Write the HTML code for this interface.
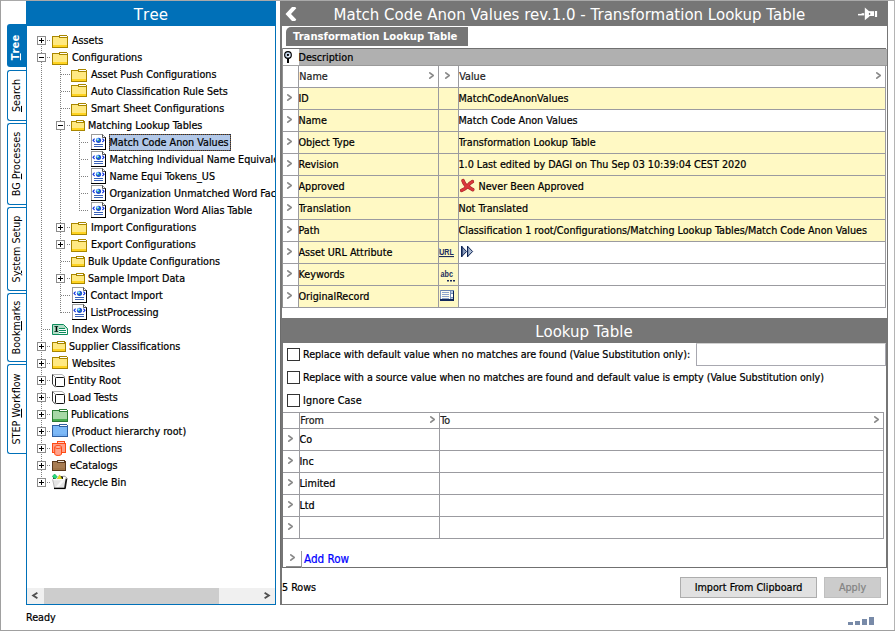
<!DOCTYPE html><html><head><meta charset="utf-8"><title>Match Code Anon Values</title><style>
html,body{margin:0;padding:0;}
body{width:895px;height:631px;position:relative;overflow:hidden;background:#fff;font-family:"DejaVu Sans Condensed","Liberation Sans",sans-serif;font-size:10.7px;color:#000;-webkit-text-stroke:0.22px currentColor;}
div,span,svg{position:absolute;box-sizing:border-box;}
.t{white-space:nowrap;line-height:17px;height:17px;}
.c{white-space:nowrap;line-height:21px;height:21px;}
.hd{font-family:"DejaVu Sans","Liberation Sans",sans-serif;font-size:15px;color:#fff;white-space:nowrap;text-align:center;line-height:25px;padding-top:2px;-webkit-text-stroke:0;}
.vt{white-space:nowrap;transform-origin:0 0;transform:rotate(-90deg);line-height:19px;height:19px;text-align:center;-webkit-text-stroke:0;}
u{text-decoration:underline;}
</style></head><body>
<div style="left:0px;top:0px;width:895px;height:1px;background:#a9a9a9"></div>
<div style="left:0px;top:0px;width:1px;height:631px;background:#a0a0a0"></div>
<div style="left:894px;top:0px;width:1px;height:631px;background:#b4b4b4"></div>
<div style="left:0px;top:630px;width:895px;height:1px;background:#a0a0a0"></div>
<div style="left:7px;top:24px;width:20px;height:43px;background:#0070b8;border-radius:3px 0 0 3px;"></div>
<div class="vt" style="left:7px;top:67px;width:43px;color:#fff;font-weight:bold;font-size:11.2px;font-kerning:none;margin-left:-1px;margin-top:2.2px;-webkit-text-stroke:0;"><u>T</u>ree</div>
<div style="left:7px;top:70px;width:20px;height:51px;background:#fff;border:1px solid #0070b8;border-right:none;border-radius:3px 0 0 3px;"></div>
<div class="vt" style="left:7px;top:121px;width:51px;color:#000;"><u>S</u>earch</div>
<div style="left:7px;top:123px;width:20px;height:82px;background:#fff;border:1px solid #0070b8;border-right:none;border-radius:3px 0 0 3px;"></div>
<div class="vt" style="left:7px;top:205px;width:82px;color:#000;">BG <u>P</u>rocesses</div>
<div style="left:7px;top:207px;width:20px;height:84px;background:#fff;border:1px solid #0070b8;border-right:none;border-radius:3px 0 0 3px;"></div>
<div class="vt" style="left:7px;top:291px;width:84px;color:#000;">S<u>y</u>stem Setup</div>
<div style="left:7px;top:293px;width:20px;height:69px;background:#fff;border:1px solid #0070b8;border-right:none;border-radius:3px 0 0 3px;"></div>
<div class="vt" style="left:7px;top:362px;width:69px;color:#000;">Book<u>m</u>arks</div>
<div style="left:7px;top:364px;width:20px;height:90px;background:#fff;border:1px solid #0070b8;border-right:none;border-radius:3px 0 0 3px;"></div>
<div class="vt" style="left:7px;top:454px;width:90px;color:#000;">STEP <u>W</u>orkflow</div>
<div class="hd" style="left:26px;top:1px;width:250px;height:25px;background:#0070b8;font-kerning:none;letter-spacing:0.15px">Tree</div>
<div style="left:26px;top:26px;width:250px;height:579px;border:1px solid #0070b8;border-top:none;background:#fff"></div>
<div style="left:27px;top:26px;width:248px;height:562px;overflow:hidden">
<div style="left:14px;top:20px;width:1px;height:432px;background:repeating-linear-gradient(to bottom,#808080 0 1px,transparent 1px 2px);"></div>
<div style="left:33px;top:38px;width:1px;height:249px;background:repeating-linear-gradient(to bottom,#808080 0 1px,transparent 1px 2px);"></div>
<div style="left:52px;top:106px;width:1px;height:79px;background:repeating-linear-gradient(to bottom,#808080 0 1px,transparent 1px 2px);"></div>
<div style="left:20px;top:14px;width:4px;height:1px;background:repeating-linear-gradient(to right,#808080 0 1px,transparent 1px 2px);"></div>
<div style="left:10px;top:10px;width:9px;height:9px;border:1px solid #8c8c8c;background:#fff"></div>
<div style="left:12px;top:14px;width:5px;height:1px;background:#000"></div>
<div style="left:14px;top:12px;width:1px;height:5px;background:#000"></div>
<div style="left:25px;top:6px;width:16px;height:16px"><svg width="16" height="18" viewBox="0 -1 16 18" style="top:-1px" shape-rendering="crispEdges"><rect x="7.5" y="3.5" width="8" height="3" fill="#fff" stroke="#a88600"/><rect x="0.5" y="4.5" width="15" height="11" fill="#ffe981" stroke="#a88600"/><rect x="1" y="13" width="14" height="2" fill="#ffd320"/><rect x="8" y="4" width="7" height="1" fill="#fff"/><rect x="7" y="5" width="9" height="1" fill="#a88600"/><rect x="15" y="3" width="1" height="1" fill="#fff"/></svg></div>
<div class="t" style="left:45px;top:6px;width:300px;height:17px;">Assets</div>
<div style="left:20px;top:31px;width:4px;height:1px;background:repeating-linear-gradient(to right,#808080 0 1px,transparent 1px 2px);"></div>
<div style="left:10px;top:27px;width:9px;height:9px;border:1px solid #8c8c8c;background:#fff"></div>
<div style="left:12px;top:31px;width:5px;height:1px;background:#000"></div>
<div style="left:25px;top:23px;width:16px;height:16px"><svg width="16" height="18" viewBox="0 -1 16 18" style="top:-1px" shape-rendering="crispEdges"><rect x="7.5" y="3.5" width="8" height="3" fill="#fff" stroke="#a88600"/><rect x="0.5" y="4.5" width="15" height="11" fill="#ffe981" stroke="#a88600"/><rect x="1" y="13" width="14" height="2" fill="#ffd320"/><rect x="8" y="4" width="7" height="1" fill="#fff"/><rect x="7" y="5" width="9" height="1" fill="#a88600"/><rect x="15" y="3" width="1" height="1" fill="#fff"/></svg></div>
<div class="t" style="left:45px;top:23px;width:300px;height:17px;">Configurations</div>
<div style="left:34px;top:48px;width:9px;height:1px;background:repeating-linear-gradient(to right,#808080 0 1px,transparent 1px 2px);"></div>
<div style="left:44px;top:40px;width:16px;height:16px"><svg width="16" height="18" viewBox="0 -1 16 18" style="top:-1px" shape-rendering="crispEdges"><rect x="7.5" y="3.5" width="8" height="3" fill="#fff" stroke="#a88600"/><rect x="0.5" y="4.5" width="15" height="11" fill="#ffe981" stroke="#a88600"/><rect x="1" y="13" width="14" height="2" fill="#ffd320"/><rect x="8" y="4" width="7" height="1" fill="#fff"/><rect x="7" y="5" width="9" height="1" fill="#a88600"/><rect x="15" y="3" width="1" height="1" fill="#fff"/></svg></div>
<div class="t" style="left:64px;top:40px;width:300px;height:17px;">Asset Push Configurations</div>
<div style="left:34px;top:65px;width:9px;height:1px;background:repeating-linear-gradient(to right,#808080 0 1px,transparent 1px 2px);"></div>
<div style="left:44px;top:57px;width:16px;height:16px"><svg width="16" height="18" viewBox="0 1 16 18" style="top:-1px" shape-rendering="crispEdges"><rect x="7.5" y="3.5" width="8" height="3" fill="#fff" stroke="#a88600"/><rect x="0.5" y="4.5" width="15" height="11" fill="#ffe981" stroke="#a88600"/><rect x="1" y="13" width="14" height="2" fill="#ffd320"/><rect x="8" y="4" width="7" height="1" fill="#fff"/><rect x="7" y="5" width="9" height="1" fill="#a88600"/><rect x="15" y="3" width="1" height="1" fill="#fff"/></svg></div>
<div class="t" style="left:64px;top:57px;width:300px;height:17px;">Auto Classification Rule Sets</div>
<div style="left:34px;top:82px;width:9px;height:1px;background:repeating-linear-gradient(to right,#808080 0 1px,transparent 1px 2px);"></div>
<div style="left:44px;top:74px;width:16px;height:16px"><svg width="16" height="18" viewBox="0 -1 16 18" style="top:-1px" shape-rendering="crispEdges"><rect x="7.5" y="3.5" width="8" height="3" fill="#fff" stroke="#a88600"/><rect x="0.5" y="4.5" width="15" height="11" fill="#ffe981" stroke="#a88600"/><rect x="1" y="13" width="14" height="2" fill="#ffd320"/><rect x="8" y="4" width="7" height="1" fill="#fff"/><rect x="7" y="5" width="9" height="1" fill="#a88600"/><rect x="15" y="3" width="1" height="1" fill="#fff"/></svg></div>
<div class="t" style="left:64px;top:74px;width:300px;height:17px;">Smart Sheet Configurations</div>
<div style="left:40px;top:99px;width:3px;height:1px;background:repeating-linear-gradient(to right,#808080 0 1px,transparent 1px 2px);"></div>
<div style="left:29px;top:95px;width:9px;height:9px;border:1px solid #8c8c8c;background:#fff"></div>
<div style="left:31px;top:99px;width:5px;height:1px;background:#000"></div>
<div style="left:44px;top:91px;width:14px;height:16px"><svg width="14" height="18" viewBox="0 -1 14 18" style="top:-1px" shape-rendering="crispEdges"><rect x="5.5" y="3.5" width="7" height="3" fill="#fff" stroke="#a88600"/><rect x="0.5" y="4.5" width="13" height="9" fill="#ffe981" stroke="#a88600"/><rect x="1" y="11" width="12" height="2" fill="#ffd320"/><rect x="6" y="4" width="6" height="1" fill="#fff"/><rect x="5" y="5" width="8" height="1" fill="#a88600"/></svg></div>
<div class="t" style="left:61px;top:91px;width:300px;height:17px;">Matching Lookup Tables</div>
<div style="left:54px;top:116px;width:8px;height:1px;background:repeating-linear-gradient(to right,#808080 0 1px,transparent 1px 2px);"></div>
<div style="left:63px;top:108px;width:16px;height:16px"><svg width="17" height="16" viewBox="-1 0 17 16"><path d="M0.5 0.5H11.5L14.5 3.5V15H0.5Z" fill="#fff" stroke="#9a9a9a" shape-rendering="crispEdges"/><path d="M0 15.5H15M14.5 3V16M11.5 3.5H15" stroke="#000" stroke-width="1.3" fill="none" shape-rendering="crispEdges"/><path d="M11.5 0.5V3.5H14.5" fill="none" stroke="#555" stroke-width="1"/><circle cx="7.5" cy="6.3" r="2.6" fill="#1a4fd8"/><circle cx="6.7" cy="5.5" r="1.25" fill="#8fe9ff"/><circle cx="7.9" cy="6.6" r="0.8" fill="#2fb84f"/><path d="M3.6 4.6L2 6.3L3.6 8M11.4 4.6L13 6.3L11.4 8" fill="none" stroke="#1030e0" stroke-width="1.1"/><path d="M3 10.5H12M3 12.5H12" stroke="#3a62b8" stroke-width="1" shape-rendering="crispEdges"/></svg></div>
<div style="left:82px;top:108px;width:122px;height:17px;background:#b2c8e8"></div>
<div style="left:82px;top:108px;width:122px;height:1px;background:repeating-linear-gradient(to right,#1a3058 0 1px,#8a6230 1px 2px)"></div>
<div style="left:82px;top:124px;width:122px;height:1px;background:repeating-linear-gradient(to right,#1a3058 0 1px,#8a6230 1px 2px)"></div>
<div style="left:82px;top:108px;width:1px;height:17px;background:repeating-linear-gradient(to bottom,#1a3058 0 1px,#8a6230 1px 2px)"></div>
<div style="left:203px;top:108px;width:1px;height:17px;background:repeating-linear-gradient(to bottom,#1a3058 0 1px,#8a6230 1px 2px)"></div>
<div class="t" style="left:82.5px;top:108px;width:300px;height:17px;">Match Code Anon Values</div>
<div style="left:54px;top:133px;width:8px;height:1px;background:repeating-linear-gradient(to right,#808080 0 1px,transparent 1px 2px);"></div>
<div style="left:63px;top:125px;width:16px;height:16px"><svg width="17" height="16" viewBox="-1 0 17 16"><path d="M0.5 0.5H11.5L14.5 3.5V15H0.5Z" fill="#fff" stroke="#9a9a9a" shape-rendering="crispEdges"/><path d="M0 15.5H15M14.5 3V16M11.5 3.5H15" stroke="#000" stroke-width="1.3" fill="none" shape-rendering="crispEdges"/><path d="M11.5 0.5V3.5H14.5" fill="none" stroke="#555" stroke-width="1"/><circle cx="7.5" cy="6.3" r="2.6" fill="#1a4fd8"/><circle cx="6.7" cy="5.5" r="1.25" fill="#8fe9ff"/><circle cx="7.9" cy="6.6" r="0.8" fill="#2fb84f"/><path d="M3.6 4.6L2 6.3L3.6 8M11.4 4.6L13 6.3L11.4 8" fill="none" stroke="#1030e0" stroke-width="1.1"/><path d="M3 10.5H12M3 12.5H12" stroke="#3a62b8" stroke-width="1" shape-rendering="crispEdges"/></svg></div>
<div class="t" style="left:82.5px;top:125px;width:300px;height:17px;">Matching Individual Name Equivalents</div>
<div style="left:54px;top:150px;width:8px;height:1px;background:repeating-linear-gradient(to right,#808080 0 1px,transparent 1px 2px);"></div>
<div style="left:63px;top:142px;width:16px;height:16px"><svg width="17" height="16" viewBox="-1 0 17 16"><path d="M0.5 0.5H11.5L14.5 3.5V15H0.5Z" fill="#fff" stroke="#9a9a9a" shape-rendering="crispEdges"/><path d="M0 15.5H15M14.5 3V16M11.5 3.5H15" stroke="#000" stroke-width="1.3" fill="none" shape-rendering="crispEdges"/><path d="M11.5 0.5V3.5H14.5" fill="none" stroke="#555" stroke-width="1"/><circle cx="7.5" cy="6.3" r="2.6" fill="#1a4fd8"/><circle cx="6.7" cy="5.5" r="1.25" fill="#8fe9ff"/><circle cx="7.9" cy="6.6" r="0.8" fill="#2fb84f"/><path d="M3.6 4.6L2 6.3L3.6 8M11.4 4.6L13 6.3L11.4 8" fill="none" stroke="#1030e0" stroke-width="1.1"/><path d="M3 10.5H12M3 12.5H12" stroke="#3a62b8" stroke-width="1" shape-rendering="crispEdges"/></svg></div>
<div class="t" style="left:82.5px;top:142px;width:300px;height:17px;">Name Equi Tokens_US</div>
<div style="left:54px;top:167px;width:8px;height:1px;background:repeating-linear-gradient(to right,#808080 0 1px,transparent 1px 2px);"></div>
<div style="left:63px;top:159px;width:16px;height:16px"><svg width="17" height="16" viewBox="-1 0 17 16"><path d="M0.5 0.5H11.5L14.5 3.5V15H0.5Z" fill="#fff" stroke="#9a9a9a" shape-rendering="crispEdges"/><path d="M0 15.5H15M14.5 3V16M11.5 3.5H15" stroke="#000" stroke-width="1.3" fill="none" shape-rendering="crispEdges"/><path d="M11.5 0.5V3.5H14.5" fill="none" stroke="#555" stroke-width="1"/><circle cx="7.5" cy="6.3" r="2.6" fill="#1a4fd8"/><circle cx="6.7" cy="5.5" r="1.25" fill="#8fe9ff"/><circle cx="7.9" cy="6.6" r="0.8" fill="#2fb84f"/><path d="M3.6 4.6L2 6.3L3.6 8M11.4 4.6L13 6.3L11.4 8" fill="none" stroke="#1030e0" stroke-width="1.1"/><path d="M3 10.5H12M3 12.5H12" stroke="#3a62b8" stroke-width="1" shape-rendering="crispEdges"/></svg></div>
<div class="t" style="left:82.5px;top:159px;width:300px;height:17px;">Organization Unmatched Word Factors</div>
<div style="left:54px;top:184px;width:8px;height:1px;background:repeating-linear-gradient(to right,#808080 0 1px,transparent 1px 2px);"></div>
<div style="left:63px;top:176px;width:16px;height:16px"><svg width="17" height="16" viewBox="-1 0 17 16"><path d="M0.5 0.5H11.5L14.5 3.5V15H0.5Z" fill="#fff" stroke="#9a9a9a" shape-rendering="crispEdges"/><path d="M0 15.5H15M14.5 3V16M11.5 3.5H15" stroke="#000" stroke-width="1.3" fill="none" shape-rendering="crispEdges"/><path d="M11.5 0.5V3.5H14.5" fill="none" stroke="#555" stroke-width="1"/><circle cx="7.5" cy="6.3" r="2.6" fill="#1a4fd8"/><circle cx="6.7" cy="5.5" r="1.25" fill="#8fe9ff"/><circle cx="7.9" cy="6.6" r="0.8" fill="#2fb84f"/><path d="M3.6 4.6L2 6.3L3.6 8M11.4 4.6L13 6.3L11.4 8" fill="none" stroke="#1030e0" stroke-width="1.1"/><path d="M3 10.5H12M3 12.5H12" stroke="#3a62b8" stroke-width="1" shape-rendering="crispEdges"/></svg></div>
<div class="t" style="left:82.5px;top:176px;width:300px;height:17px;">Organization Word Alias Table</div>
<div style="left:40px;top:201px;width:3px;height:1px;background:repeating-linear-gradient(to right,#808080 0 1px,transparent 1px 2px);"></div>
<div style="left:29px;top:197px;width:9px;height:9px;border:1px solid #8c8c8c;background:#fff"></div>
<div style="left:31px;top:201px;width:5px;height:1px;background:#000"></div>
<div style="left:33px;top:199px;width:1px;height:5px;background:#000"></div>
<div style="left:44px;top:193px;width:16px;height:16px"><svg width="16" height="18" viewBox="0 -1 16 18" style="top:-1px" shape-rendering="crispEdges"><rect x="7.5" y="3.5" width="8" height="3" fill="#fff" stroke="#a88600"/><rect x="0.5" y="4.5" width="15" height="11" fill="#ffe981" stroke="#a88600"/><rect x="1" y="13" width="14" height="2" fill="#ffd320"/><rect x="8" y="4" width="7" height="1" fill="#fff"/><rect x="7" y="5" width="9" height="1" fill="#a88600"/><rect x="15" y="3" width="1" height="1" fill="#fff"/></svg></div>
<div class="t" style="left:64px;top:193px;width:300px;height:17px;">Import Configurations</div>
<div style="left:40px;top:218px;width:3px;height:1px;background:repeating-linear-gradient(to right,#808080 0 1px,transparent 1px 2px);"></div>
<div style="left:29px;top:214px;width:9px;height:9px;border:1px solid #8c8c8c;background:#fff"></div>
<div style="left:31px;top:218px;width:5px;height:1px;background:#000"></div>
<div style="left:33px;top:216px;width:1px;height:5px;background:#000"></div>
<div style="left:44px;top:210px;width:16px;height:16px"><svg width="16" height="18" viewBox="0 -1 16 18" style="top:-1px" shape-rendering="crispEdges"><rect x="7.5" y="3.5" width="8" height="3" fill="#fff" stroke="#a88600"/><rect x="0.5" y="4.5" width="15" height="11" fill="#ffe981" stroke="#a88600"/><rect x="1" y="13" width="14" height="2" fill="#ffd320"/><rect x="8" y="4" width="7" height="1" fill="#fff"/><rect x="7" y="5" width="9" height="1" fill="#a88600"/><rect x="15" y="3" width="1" height="1" fill="#fff"/></svg></div>
<div class="t" style="left:64px;top:210px;width:300px;height:17px;">Export Configurations</div>
<div style="left:34px;top:235px;width:9px;height:1px;background:repeating-linear-gradient(to right,#808080 0 1px,transparent 1px 2px);"></div>
<div style="left:44px;top:227px;width:14px;height:16px"><svg width="14" height="18" viewBox="0 -1 14 18" style="top:-1px" shape-rendering="crispEdges"><rect x="5.5" y="3.5" width="7" height="3" fill="#fff" stroke="#a88600"/><rect x="0.5" y="4.5" width="13" height="9" fill="#ffe981" stroke="#a88600"/><rect x="1" y="11" width="12" height="2" fill="#ffd320"/><rect x="6" y="4" width="6" height="1" fill="#fff"/><rect x="5" y="5" width="8" height="1" fill="#a88600"/></svg></div>
<div class="t" style="left:61px;top:227px;width:300px;height:17px;">Bulk Update Configurations</div>
<div style="left:40px;top:252px;width:3px;height:1px;background:repeating-linear-gradient(to right,#808080 0 1px,transparent 1px 2px);"></div>
<div style="left:29px;top:248px;width:9px;height:9px;border:1px solid #8c8c8c;background:#fff"></div>
<div style="left:31px;top:252px;width:5px;height:1px;background:#000"></div>
<div style="left:33px;top:250px;width:1px;height:5px;background:#000"></div>
<div style="left:44px;top:244px;width:14px;height:16px"><svg width="14" height="18" viewBox="0 -1 14 18" style="top:-1px" shape-rendering="crispEdges"><rect x="5.5" y="3.5" width="7" height="3" fill="#fff" stroke="#a88600"/><rect x="0.5" y="4.5" width="13" height="9" fill="#ffe981" stroke="#a88600"/><rect x="1" y="11" width="12" height="2" fill="#ffd320"/><rect x="6" y="4" width="6" height="1" fill="#fff"/><rect x="5" y="5" width="8" height="1" fill="#a88600"/></svg></div>
<div class="t" style="left:61px;top:244px;width:300px;height:17px;">Sample Import Data</div>
<div style="left:34px;top:269px;width:9px;height:1px;background:repeating-linear-gradient(to right,#808080 0 1px,transparent 1px 2px);"></div>
<div style="left:44px;top:261px;width:16px;height:16px"><svg width="17" height="16" viewBox="-1 0 17 16"><path d="M0.5 0.5H11.5L14.5 3.5V15H0.5Z" fill="#fff" stroke="#9a9a9a" shape-rendering="crispEdges"/><path d="M0 15.5H15M14.5 3V16M11.5 3.5H15" stroke="#000" stroke-width="1.3" fill="none" shape-rendering="crispEdges"/><path d="M11.5 0.5V3.5H14.5" fill="none" stroke="#555" stroke-width="1"/><circle cx="7.5" cy="6.3" r="2.6" fill="#1a4fd8"/><circle cx="6.7" cy="5.5" r="1.25" fill="#8fe9ff"/><circle cx="7.9" cy="6.6" r="0.8" fill="#2fb84f"/><path d="M3.6 4.6L2 6.3L3.6 8M11.4 4.6L13 6.3L11.4 8" fill="none" stroke="#1030e0" stroke-width="1.1"/><path d="M3 10.5H12M3 12.5H12" stroke="#3a62b8" stroke-width="1" shape-rendering="crispEdges"/></svg></div>
<div class="t" style="left:63.5px;top:261px;width:300px;height:17px;">Contact Import</div>
<div style="left:34px;top:286px;width:9px;height:1px;background:repeating-linear-gradient(to right,#808080 0 1px,transparent 1px 2px);"></div>
<div style="left:44px;top:278px;width:16px;height:16px"><svg width="17" height="16" viewBox="-1 0 17 16"><path d="M0.5 0.5H11.5L14.5 3.5V15H0.5Z" fill="#fff" stroke="#9a9a9a" shape-rendering="crispEdges"/><path d="M0 15.5H15M14.5 3V16M11.5 3.5H15" stroke="#000" stroke-width="1.3" fill="none" shape-rendering="crispEdges"/><path d="M11.5 0.5V3.5H14.5" fill="none" stroke="#555" stroke-width="1"/><circle cx="7.5" cy="6.3" r="2.6" fill="#1a4fd8"/><circle cx="6.7" cy="5.5" r="1.25" fill="#8fe9ff"/><circle cx="7.9" cy="6.6" r="0.8" fill="#2fb84f"/><path d="M3.6 4.6L2 6.3L3.6 8M11.4 4.6L13 6.3L11.4 8" fill="none" stroke="#1030e0" stroke-width="1.1"/><path d="M3 10.5H12M3 12.5H12" stroke="#3a62b8" stroke-width="1" shape-rendering="crispEdges"/></svg></div>
<div class="t" style="left:63.5px;top:278px;width:300px;height:17px;">ListProcessing</div>
<div style="left:16px;top:303px;width:8px;height:1px;background:repeating-linear-gradient(to right,#808080 0 1px,transparent 1px 2px);"></div>
<div style="left:25px;top:295px;width:16px;height:16px"><svg width="16" height="16" viewBox="0 0 16 16"><path d="M0.5 3.5H11.5L15.5 7.5V13.5H0.5Z" fill="#b2dcc6" stroke="#0c8c5c"/><path d="M7 7H13L15 9V13H7Z" fill="#fff" opacity="0.9"/><path d="M7 7.5H13M7 9.5H14M7 11.5H14" stroke="#0c8c5c" stroke-width="1" shape-rendering="crispEdges"/><rect x="3.7" y="5" width="1.5" height="6" fill="#000"/><rect x="2.4" y="5" width="3.8" height="0.9" fill="#0a3a2a"/><rect x="2.4" y="10.1" width="3.8" height="0.9" fill="#0a3a2a"/></svg></div>
<div class="t" style="left:45px;top:295px;width:300px;height:17px;">Index Words</div>
<div style="left:20px;top:320px;width:4px;height:1px;background:repeating-linear-gradient(to right,#808080 0 1px,transparent 1px 2px);"></div>
<div style="left:10px;top:316px;width:9px;height:9px;border:1px solid #8c8c8c;background:#fff"></div>
<div style="left:12px;top:320px;width:5px;height:1px;background:#000"></div>
<div style="left:14px;top:318px;width:1px;height:5px;background:#000"></div>
<div style="left:25px;top:312px;width:14px;height:16px"><svg width="14" height="18" viewBox="0 -1 14 18" style="top:-1px" shape-rendering="crispEdges"><rect x="5.5" y="3.5" width="7" height="3" fill="#fff" stroke="#a88600"/><rect x="0.5" y="4.5" width="13" height="9" fill="#ffe981" stroke="#a88600"/><rect x="1" y="11" width="12" height="2" fill="#ffd320"/><rect x="6" y="4" width="6" height="1" fill="#fff"/><rect x="5" y="5" width="8" height="1" fill="#a88600"/></svg></div>
<div class="t" style="left:42px;top:312px;width:300px;height:17px;">Supplier Classifications</div>
<div style="left:20px;top:337px;width:4px;height:1px;background:repeating-linear-gradient(to right,#808080 0 1px,transparent 1px 2px);"></div>
<div style="left:10px;top:333px;width:9px;height:9px;border:1px solid #8c8c8c;background:#fff"></div>
<div style="left:12px;top:337px;width:5px;height:1px;background:#000"></div>
<div style="left:14px;top:335px;width:1px;height:5px;background:#000"></div>
<div style="left:25px;top:329px;width:16px;height:16px"><svg width="16" height="18" viewBox="0 1 16 18" style="top:-1px" shape-rendering="crispEdges"><rect x="7.5" y="3.5" width="8" height="3" fill="#fff" stroke="#a88600"/><rect x="0.5" y="4.5" width="15" height="11" fill="#ffe981" stroke="#a88600"/><rect x="1" y="13" width="14" height="2" fill="#ffd320"/><rect x="8" y="4" width="7" height="1" fill="#fff"/><rect x="7" y="5" width="9" height="1" fill="#a88600"/><rect x="15" y="3" width="1" height="1" fill="#fff"/></svg></div>
<div class="t" style="left:45px;top:329px;width:300px;height:17px;">Websites</div>
<div style="left:20px;top:354px;width:4px;height:1px;background:repeating-linear-gradient(to right,#808080 0 1px,transparent 1px 2px);"></div>
<div style="left:10px;top:350px;width:9px;height:9px;border:1px solid #8c8c8c;background:#fff"></div>
<div style="left:12px;top:354px;width:5px;height:1px;background:#000"></div>
<div style="left:14px;top:352px;width:1px;height:5px;background:#000"></div>
<div style="left:25px;top:346px;width:13px;height:16px"><svg width="14" height="16" viewBox="0 0 14 16"><path d="M0.5 2.5H10L13 5" fill="none" stroke="#b4b4b4" stroke-width="1"/><path d="M0.7 2.7L3.3 5.2" fill="none" stroke="#9a9a9a" stroke-width="1"/><path d="M0.5 2.5V12.2L3.2 14.8" fill="none" stroke="#333" stroke-width="1"/><rect x="3.5" y="5.5" width="9" height="9" rx="0.8" fill="#fff" stroke="#111" stroke-width="1"/></svg></div>
<div class="t" style="left:41px;top:346px;width:300px;height:17px;">Entity Root</div>
<div style="left:20px;top:371px;width:4px;height:1px;background:repeating-linear-gradient(to right,#808080 0 1px,transparent 1px 2px);"></div>
<div style="left:10px;top:367px;width:9px;height:9px;border:1px solid #8c8c8c;background:#fff"></div>
<div style="left:12px;top:371px;width:5px;height:1px;background:#000"></div>
<div style="left:14px;top:369px;width:1px;height:5px;background:#000"></div>
<div style="left:25px;top:363px;width:13px;height:16px"><svg width="14" height="16" viewBox="0 0 14 16"><path d="M0.5 2.5H10L13 5" fill="none" stroke="#b4b4b4" stroke-width="1"/><path d="M0.7 2.7L3.3 5.2" fill="none" stroke="#9a9a9a" stroke-width="1"/><path d="M0.5 2.5V12.2L3.2 14.8" fill="none" stroke="#333" stroke-width="1"/><rect x="3.5" y="5.5" width="9" height="9" rx="0.8" fill="#fff" stroke="#111" stroke-width="1"/></svg></div>
<div class="t" style="left:41px;top:363px;width:300px;height:17px;">Load Tests</div>
<div style="left:20px;top:388px;width:4px;height:1px;background:repeating-linear-gradient(to right,#808080 0 1px,transparent 1px 2px);"></div>
<div style="left:10px;top:384px;width:9px;height:9px;border:1px solid #8c8c8c;background:#fff"></div>
<div style="left:12px;top:388px;width:5px;height:1px;background:#000"></div>
<div style="left:14px;top:386px;width:1px;height:5px;background:#000"></div>
<div style="left:25px;top:380px;width:16px;height:16px"><svg width="16" height="18" viewBox="0 -1 16 18" style="top:-1px" shape-rendering="crispEdges"><rect x="7.5" y="3.5" width="8" height="3" fill="#fff" stroke="#2b7a34"/><rect x="0.5" y="4.5" width="15" height="11" fill="#a6d8a6" stroke="#2b7a34"/><rect x="1" y="13" width="14" height="2" fill="#48ac4e"/><rect x="8" y="4" width="7" height="1" fill="#fff"/><rect x="7" y="5" width="9" height="1" fill="#2b7a34"/><rect x="15" y="3" width="1" height="1" fill="#fff"/></svg></div>
<div class="t" style="left:44px;top:380px;width:300px;height:17px;">Publications</div>
<div style="left:20px;top:405px;width:4px;height:1px;background:repeating-linear-gradient(to right,#808080 0 1px,transparent 1px 2px);"></div>
<div style="left:10px;top:401px;width:9px;height:9px;border:1px solid #8c8c8c;background:#fff"></div>
<div style="left:12px;top:405px;width:5px;height:1px;background:#000"></div>
<div style="left:14px;top:403px;width:1px;height:5px;background:#000"></div>
<div style="left:25px;top:397px;width:16px;height:16px"><svg width="16" height="18" viewBox="0 1 16 18" style="top:-1px" shape-rendering="crispEdges"><rect x="7.5" y="3.5" width="8" height="3" fill="#fff" stroke="#2f5fa0"/><rect x="0.5" y="4.5" width="15" height="11" fill="#7db9f7" stroke="#2f5fa0"/><rect x="1" y="13" width="14" height="2" fill="#74b0f2"/><rect x="8" y="4" width="7" height="1" fill="#fff"/><rect x="7" y="5" width="9" height="1" fill="#2f5fa0"/><rect x="15" y="3" width="1" height="1" fill="#fff"/></svg></div>
<div class="t" style="left:44.5px;top:397px;width:300px;height:17px;">(Product hierarchy root)</div>
<div style="left:20px;top:422px;width:4px;height:1px;background:repeating-linear-gradient(to right,#808080 0 1px,transparent 1px 2px);"></div>
<div style="left:10px;top:418px;width:9px;height:9px;border:1px solid #8c8c8c;background:#fff"></div>
<div style="left:12px;top:422px;width:5px;height:1px;background:#000"></div>
<div style="left:14px;top:420px;width:1px;height:5px;background:#000"></div>
<div style="left:25px;top:414px;width:14px;height:16px"><svg width="14" height="16" viewBox="0 0 14 16"><rect x="5.5" y="1.5" width="7" height="3" fill="#ffd0c4" stroke="#ff4a14" shape-rendering="crispEdges"/><rect x="0.5" y="3.5" width="13" height="9" fill="#ff9d86" stroke="#ff4a14" shape-rendering="crispEdges"/><path d="M2.7 7V14A3.4 1.5 0 0 0 9.5 14V7" fill="#ffa28c" stroke="#ff4a14"/><ellipse cx="6.1" cy="7" rx="3.4" ry="1.5" fill="#ffb9a6" stroke="#ff4a14"/></svg></div>
<div class="t" style="left:42.5px;top:414px;width:300px;height:17px;">Collections</div>
<div style="left:20px;top:439px;width:4px;height:1px;background:repeating-linear-gradient(to right,#808080 0 1px,transparent 1px 2px);"></div>
<div style="left:10px;top:435px;width:9px;height:9px;border:1px solid #8c8c8c;background:#fff"></div>
<div style="left:12px;top:439px;width:5px;height:1px;background:#000"></div>
<div style="left:14px;top:437px;width:1px;height:5px;background:#000"></div>
<div style="left:25px;top:431px;width:14px;height:16px"><svg width="14" height="18" viewBox="0 -1 14 18" style="top:-1px" shape-rendering="crispEdges"><rect x="5.5" y="3.5" width="7" height="3" fill="#f0e4d8" stroke="#5c3a1e"/><rect x="0.5" y="4.5" width="13" height="9" fill="#a87c52" stroke="#5c3a1e"/><rect x="1" y="11" width="12" height="2" fill="#a07448"/><rect x="6" y="4" width="6" height="1" fill="#f0e4d8"/><rect x="5" y="5" width="8" height="1" fill="#5c3a1e"/></svg></div>
<div class="t" style="left:42.7px;top:431px;width:300px;height:17px;">eCatalogs</div>
<div style="left:20px;top:456px;width:4px;height:1px;background:repeating-linear-gradient(to right,#808080 0 1px,transparent 1px 2px);"></div>
<div style="left:10px;top:452px;width:9px;height:9px;border:1px solid #8c8c8c;background:#fff"></div>
<div style="left:12px;top:456px;width:5px;height:1px;background:#000"></div>
<div style="left:14px;top:454px;width:1px;height:5px;background:#000"></div>
<div style="left:25px;top:448px;width:16px;height:16px"><svg width="16" height="16" viewBox="0 0 16 16"><rect x="1.2" y="3.4" width="2.4" height="2" fill="#111"/><rect x="8.4" y="2.2" width="2.6" height="2.8" fill="#111"/><path d="M10.5 2.4L13 2.2L15.3 4.6" fill="none" stroke="#9a9a9a" stroke-width="1"/><path d="M0.3 2.4L2.6 0L5.3 2.8L3.1 5.3Z" fill="#25dd7a" stroke="#0c9a4c" stroke-width="0.6"/><path d="M5 5.3L7.6 0.9L10.3 5.3Z" fill="#e6de22" stroke="#b4ac14" stroke-width="0.5"/><path d="M0.4 5.2H14.7L13.1 14H2.3Z" fill="#e4e4e4"/><path d="M0.3 5H14.7V6.3H0.5Z" fill="#fbfbfb"/><path d="M9.2 6.6H12.6L6.2 13.6H3.6Z" fill="#f8f8f8"/><path d="M0.6 5.4L2.5 14" stroke="#b8b8b8" stroke-width="1" fill="none"/><path d="M14.5 4.6L13 14" stroke="#111" stroke-width="1.7" fill="none"/><path d="M2 14.4H13.6" stroke="#000" stroke-width="1.4"/></svg></div>
<div class="t" style="left:44px;top:448px;width:300px;height:17px;">Recycle Bin</div>
</div>
<div style="left:27px;top:588px;width:248px;height:16px;background:#f0f0f0"></div>
<div style="left:44px;top:588px;width:175px;height:16px;background:#cdcdcd"></div>
<svg style="left:31px;top:591px" width="8" height="10" viewBox="0 0 8 10"><path d="M6.4 1.8L2.2 4.5L6.4 7.2" fill="none" stroke="#505050" stroke-width="1.9"/></svg>
<svg style="left:263px;top:591px" width="8" height="10" viewBox="0 0 8 10"><path d="M1.6 1.8L5.8 4.5L1.6 7.2" fill="none" stroke="#505050" stroke-width="1.9"/></svg>
<div class="t" style="left:26px;top:609px;width:100px;height:17px;">Ready</div>
<div style="left:848px;top:622px;width:5px;height:3px;background:#788aa8"></div>
<div style="left:855px;top:621px;width:5px;height:4px;background:#788aa8"></div>
<div style="left:862px;top:619px;width:5px;height:6px;background:#788aa8"></div>
<div style="left:869px;top:617px;width:5px;height:8px;background:#788aa8"></div>
<div style="left:280px;top:1px;width:608px;height:25px;background:#767676"></div>
<div style="left:280px;top:26px;width:2px;height:579px;background:#767676"></div>
<div style="left:887px;top:26px;width:1px;height:579px;background:#767676"></div>
<div style="left:280px;top:604px;width:608px;height:1px;background:#767676"></div>
<div style="left:282px;top:48px;width:1px;height:260px;background:#929292"></div>
<div class="hd" style="left:333.5px;top:1px;width:480px;height:25px;text-align:left">Match Code Anon Values rev.1.0 - Transformation Lookup Table</div>
<svg style="left:284px;top:5px" width="14" height="18" viewBox="0 0 14 18"><path d="M1.5 8.9L8 1.9H11.2L12.3 3.3L7 8.9L12.3 14.5L11.2 15.9H8Z" fill="#fff"/></svg>
<svg style="left:857px;top:7px" width="21" height="14" viewBox="0 0 21 14"><rect x="1" y="6.9" width="6.2" height="1.5" fill="#fff"/><rect x="4.6" y="6.2" width="2.6" height="1" fill="#fff"/><path d="M7.8 0.6L12.4 4.4V9.4L7.8 13.2Z" fill="#fff"/><rect x="12" y="4.2" width="5" height="4.8" fill="#fff"/><rect x="11.9" y="5.9" width="1.3" height="2" fill="#767676"/><rect x="17.9" y="4" width="2.2" height="6" fill="#fff"/></svg>
<div style="left:286px;top:27px;width:182px;height:19px;background:#767676;border-radius:5px 0 0 0;color:#fff;font-weight:bold;font-size:11.2px;-webkit-text-stroke:0;line-height:20px;padding-left:7px;white-space:nowrap">Transformation Lookup Table</div>
<div style="left:283px;top:48px;width:603px;height:1px;background:#707070"></div>
<div style="left:299px;top:49px;width:588px;height:17px;background:#b0b0b0;border-bottom:1px solid #9a9a9a"></div>
<div style="left:283px;top:65px;width:16px;height:1px;background:#a4a4a4"></div>
<div class="t" style="left:298.5px;top:49px;width:200px;height:17px;line-height:17px">Description</div>
<svg style="left:283px;top:50px" width="10" height="15" viewBox="0 0 10 15"><circle cx="5" cy="5" r="3.35" fill="#c2d2e6" stroke="#000" stroke-width="1.1"/><circle cx="5.8" cy="5.9" r="1.2" fill="#fff" opacity="0.8"/><rect x="4" y="4" width="1.9" height="1.9" fill="#000"/><path d="M5 8.5V13" stroke="#000" stroke-width="2"/></svg>
<div class="c" style="left:299.3px;top:66px;width:139px;height:21px;color:#222">Name</div>
<div class="c" style="left:459.3px;top:66px;width:300px;height:21px;color:#222">Value</div>
<svg style="left:428px;top:71px" width="7" height="9" viewBox="0 0 7 9"><path d="M1.8 1.8L5.2 4.5L1.8 7.2" fill="none" stroke="#8a8a8a" stroke-width="1.7" stroke-linecap="round" stroke-linejoin="round"/></svg>
<svg style="left:444px;top:71px" width="7" height="9" viewBox="0 0 7 9"><path d="M1.8 1.8L5.2 4.5L1.8 7.2" fill="none" stroke="#8a8a8a" stroke-width="1.7" stroke-linecap="round" stroke-linejoin="round"/></svg>
<svg style="left:875px;top:71px" width="7" height="9" viewBox="0 0 7 9"><path d="M1.8 1.8L5.2 4.5L1.8 7.2" fill="none" stroke="#8a8a8a" stroke-width="1.7" stroke-linecap="round" stroke-linejoin="round"/></svg>
<div style="left:283px;top:87px;width:603px;height:1px;background:#9b9ba0"></div>
<div style="left:299px;top:88px;width:139px;height:21px;background:#fff9c4"></div>
<div style="left:439px;top:88px;width:19px;height:21px;background:#fff9c4"></div>
<div style="left:459px;top:88px;width:426px;height:21px;background:#fff9c4"></div>
<div style="left:283px;top:109px;width:603px;height:1px;background:#9b9ba0"></div>
<svg style="left:286px;top:93px" width="7" height="9" viewBox="0 0 7 9"><path d="M1.8 1.8L5.2 4.5L1.8 7.2" fill="none" stroke="#8a8a8a" stroke-width="1.7" stroke-linecap="round" stroke-linejoin="round"/></svg>
<div class="c" style="left:298.5px;top:88px;width:139px;height:21px;">ID</div>
<div class="c" style="left:458.5px;top:88px;width:426px;height:21px;">MatchCodeAnonValues</div>
<div style="left:299px;top:110px;width:139px;height:21px;background:#fff9c4"></div>
<div style="left:439px;top:110px;width:19px;height:21px;background:#fff9c4"></div>
<div style="left:283px;top:131px;width:603px;height:1px;background:#9b9ba0"></div>
<svg style="left:286px;top:115px" width="7" height="9" viewBox="0 0 7 9"><path d="M1.8 1.8L5.2 4.5L1.8 7.2" fill="none" stroke="#8a8a8a" stroke-width="1.7" stroke-linecap="round" stroke-linejoin="round"/></svg>
<div class="c" style="left:298.5px;top:110px;width:139px;height:21px;">Name</div>
<div class="c" style="left:458.5px;top:110px;width:426px;height:21px;">Match Code Anon Values</div>
<div style="left:299px;top:132px;width:139px;height:21px;background:#fff9c4"></div>
<div style="left:439px;top:132px;width:19px;height:21px;background:#fff9c4"></div>
<div style="left:459px;top:132px;width:426px;height:21px;background:#fff9c4"></div>
<div style="left:283px;top:153px;width:603px;height:1px;background:#9b9ba0"></div>
<svg style="left:286px;top:137px" width="7" height="9" viewBox="0 0 7 9"><path d="M1.8 1.8L5.2 4.5L1.8 7.2" fill="none" stroke="#8a8a8a" stroke-width="1.7" stroke-linecap="round" stroke-linejoin="round"/></svg>
<div class="c" style="left:298.5px;top:132px;width:139px;height:21px;">Object Type</div>
<div class="c" style="left:458.5px;top:132px;width:426px;height:21px;">Transformation Lookup Table</div>
<div style="left:299px;top:154px;width:139px;height:21px;background:#fff9c4"></div>
<div style="left:439px;top:154px;width:19px;height:21px;background:#fff9c4"></div>
<div style="left:459px;top:154px;width:426px;height:21px;background:#fff9c4"></div>
<div style="left:283px;top:175px;width:603px;height:1px;background:#9b9ba0"></div>
<svg style="left:286px;top:159px" width="7" height="9" viewBox="0 0 7 9"><path d="M1.8 1.8L5.2 4.5L1.8 7.2" fill="none" stroke="#8a8a8a" stroke-width="1.7" stroke-linecap="round" stroke-linejoin="round"/></svg>
<div class="c" style="left:298.5px;top:154px;width:139px;height:21px;">Revision</div>
<div class="c" style="left:458.5px;top:154px;width:426px;height:21px;">1.0 Last edited by DAGI on Thu Sep 03 10:39:04 CEST 2020</div>
<div style="left:299px;top:176px;width:139px;height:21px;background:#fff9c4"></div>
<div style="left:439px;top:176px;width:19px;height:21px;background:#fff9c4"></div>
<div style="left:459px;top:176px;width:426px;height:21px;background:#fff9c4"></div>
<div style="left:283px;top:197px;width:603px;height:1px;background:#9b9ba0"></div>
<svg style="left:286px;top:181px" width="7" height="9" viewBox="0 0 7 9"><path d="M1.8 1.8L5.2 4.5L1.8 7.2" fill="none" stroke="#8a8a8a" stroke-width="1.7" stroke-linecap="round" stroke-linejoin="round"/></svg>
<div class="c" style="left:298.5px;top:176px;width:139px;height:21px;">Approved</div>
<svg style="left:459px;top:178px" width="17" height="16" viewBox="0 0 17 16"><path d="M4 2.6C5 5.5 6.5 7.6 8.5 8.6S12 10.6 13.8 11.6" fill="none" stroke="#a02626" stroke-width="3.5" stroke-linecap="round"/><path d="M13.4 3.6C11 4.6 9.5 6.6 8 8.6S5 11.6 2.7 12.4" fill="none" stroke="#a02626" stroke-width="3.5" stroke-linecap="round"/><path d="M4 2.6C5 5.5 6.5 7.6 8.5 8.6S12 10.6 13.8 11.6" fill="none" stroke="#da383c" stroke-width="2.5" stroke-linecap="round"/><path d="M13.4 3.6C11 4.6 9.5 6.6 8 8.6S5 11.6 2.7 12.4" fill="none" stroke="#da383c" stroke-width="2.5" stroke-linecap="round"/></svg>
<div class="c" style="left:478.5px;top:176px;width:300px;height:21px;">Never Been Approved</div>
<div style="left:299px;top:198px;width:139px;height:21px;background:#fff9c4"></div>
<div style="left:439px;top:198px;width:19px;height:21px;background:#fff9c4"></div>
<div style="left:459px;top:198px;width:426px;height:21px;background:#fff9c4"></div>
<div style="left:283px;top:219px;width:603px;height:1px;background:#9b9ba0"></div>
<svg style="left:286px;top:203px" width="7" height="9" viewBox="0 0 7 9"><path d="M1.8 1.8L5.2 4.5L1.8 7.2" fill="none" stroke="#8a8a8a" stroke-width="1.7" stroke-linecap="round" stroke-linejoin="round"/></svg>
<div class="c" style="left:298.5px;top:198px;width:139px;height:21px;">Translation</div>
<div class="c" style="left:458.5px;top:198px;width:426px;height:21px;">Not Translated</div>
<div style="left:299px;top:220px;width:139px;height:21px;background:#fff9c4"></div>
<div style="left:439px;top:220px;width:19px;height:21px;background:#fff9c4"></div>
<div style="left:459px;top:220px;width:426px;height:21px;background:#fff9c4"></div>
<div style="left:283px;top:241px;width:603px;height:1px;background:#9b9ba0"></div>
<svg style="left:286px;top:225px" width="7" height="9" viewBox="0 0 7 9"><path d="M1.8 1.8L5.2 4.5L1.8 7.2" fill="none" stroke="#8a8a8a" stroke-width="1.7" stroke-linecap="round" stroke-linejoin="round"/></svg>
<div class="c" style="left:298.5px;top:220px;width:139px;height:21px;">Path</div>
<div class="c" style="left:458.5px;top:220px;width:426px;height:21px;">Classification 1 root/Configurations/Matching Lookup Tables/Match Code Anon Values</div>
<div style="left:299px;top:242px;width:139px;height:21px;background:#fff9c4"></div>
<div style="left:439px;top:242px;width:19px;height:21px;background:#fff9c4"></div>
<div style="left:283px;top:263px;width:603px;height:1px;background:#9b9ba0"></div>
<svg style="left:286px;top:247px" width="7" height="9" viewBox="0 0 7 9"><path d="M1.8 1.8L5.2 4.5L1.8 7.2" fill="none" stroke="#8a8a8a" stroke-width="1.7" stroke-linecap="round" stroke-linejoin="round"/></svg>
<div class="c" style="left:298.5px;top:242px;width:139px;height:21px;">Asset URL Attribute</div>
<div class="c" style="left:458.5px;top:242px;width:426px;height:21px;"></div>
<svg style="left:438px;top:242px" width="20" height="21" viewBox="0 0 20 21"><rect x="1" y="6" width="1" height="7" fill="#b4c8e4"/><text x="1.2" y="13" font-family="Liberation Sans,sans-serif" font-size="9.8" font-weight="bold" fill="#1c2c5c" textLength="14.6" lengthAdjust="spacingAndGlyphs">URL</text><rect x="1" y="14" width="15" height="1.1" fill="#1c2c5c"/></svg>
<svg style="left:460px;top:245px" width="15" height="14" viewBox="0 0 15 14"><path d="M1.5 1.2L6.6 6.5L1.5 11.8Z" fill="#8a9cbc" stroke="#0e2454" stroke-width="1"/><path d="M1.8 1.2V11.8" stroke="#0e2454" stroke-width="1.6"/><path d="M7.5 1.2L12.6 6.5L7.5 11.8Z" fill="#a8b8d0" stroke="#0e2454" stroke-width="1"/><path d="M7.6 1.2V11.8" stroke="#0e2454" stroke-width="1.2"/></svg>
<div style="left:299px;top:264px;width:139px;height:21px;background:#fff9c4"></div>
<div style="left:439px;top:264px;width:19px;height:21px;background:#fff9c4"></div>
<div style="left:283px;top:285px;width:603px;height:1px;background:#9b9ba0"></div>
<svg style="left:286px;top:269px" width="7" height="9" viewBox="0 0 7 9"><path d="M1.8 1.8L5.2 4.5L1.8 7.2" fill="none" stroke="#8a8a8a" stroke-width="1.7" stroke-linecap="round" stroke-linejoin="round"/></svg>
<div class="c" style="left:298.5px;top:264px;width:139px;height:21px;">Keywords</div>
<div class="c" style="left:458.5px;top:264px;width:426px;height:21px;"></div>
<svg style="left:438px;top:264px" width="20" height="21" viewBox="0 0 20 21"><text x="2.6" y="12.6" font-family="Liberation Sans,sans-serif" font-size="9.4" font-weight="bold" fill="#1c2c5c" textLength="12.4" lengthAdjust="spacingAndGlyphs">abc</text><rect x="9" y="16" width="2" height="1.5" fill="#1c2c5c"/><rect x="12" y="16" width="2" height="1.5" fill="#1c2c5c"/><rect x="15" y="16" width="2" height="1.5" fill="#1c2c5c"/></svg>
<div style="left:299px;top:286px;width:139px;height:21px;background:#fff9c4"></div>
<div style="left:439px;top:286px;width:19px;height:21px;background:#fff9c4"></div>
<div style="left:283px;top:307px;width:603px;height:1px;background:#9b9ba0"></div>
<svg style="left:286px;top:291px" width="7" height="9" viewBox="0 0 7 9"><path d="M1.8 1.8L5.2 4.5L1.8 7.2" fill="none" stroke="#8a8a8a" stroke-width="1.7" stroke-linecap="round" stroke-linejoin="round"/></svg>
<div class="c" style="left:298.5px;top:286px;width:139px;height:21px;">OriginalRecord</div>
<div class="c" style="left:458.5px;top:286px;width:426px;height:21px;"></div>
<svg style="left:440px;top:290px" width="14" height="11" viewBox="0 0 14 11" shape-rendering="crispEdges"><rect x="0" y="0" width="14" height="11" fill="#fffdf0"/><rect x="10" y="1" width="3" height="8" fill="#7890b8"/><rect x="11" y="1" width="2" height="2" fill="#b8c8e0"/><rect x="11" y="4" width="2" height="3" fill="#fff"/><rect x="11" y="7.6" width="2" height="1.4" fill="#b8c8e0"/><rect x="0" y="0" width="14" height="1" fill="#6a84b0"/><rect x="0" y="0" width="1" height="10" fill="#8098c0"/><rect x="0" y="9.4" width="14" height="1.6" fill="#142a5c"/><rect x="13" y="1" width="1" height="10" fill="#0a2050"/><path d="M2 2.5H9M2 4.5H9M2 6.5H9M2 8.5H9" stroke="#8ea4cc"/></svg>
<div style="left:298px;top:66px;width:1px;height:242px;background:#9b9ba0"></div>
<div style="left:438px;top:66px;width:1px;height:242px;background:#9b9ba0"></div>
<div style="left:458px;top:66px;width:1px;height:242px;background:#9b9ba0"></div>
<div style="left:885px;top:66px;width:1px;height:242px;background:#9b9ba0"></div>
<div class="hd" style="left:280px;top:318px;width:608px;height:25px;background:#767676">Lookup Table</div>
<div style="left:280px;top:343px;width:3px;height:225px;background:#767676"></div>
<div style="left:280px;top:318px;width:1px;height:250px;background:#6c6c6c"></div>
<div style="left:886px;top:343px;width:2px;height:225px;background:#767676"></div>
<div style="left:283px;top:567px;width:605px;height:1px;background:#707070"></div>
<div style="left:287px;top:348px;width:13px;height:13px;border:1px solid #333;background:#fff"></div>
<div class="c" style="left:303px;top:344px;width:600px;height:21px;letter-spacing:-0.035px">Replace with default value when no matches are found (Value Substitution only):</div>
<div style="left:287px;top:371px;width:13px;height:13px;border:1px solid #333;background:#fff"></div>
<div class="c" style="left:303px;top:367px;width:600px;height:21px;letter-spacing:-0.045px">Replace with a source value when no matches are found and default value is empty (Value Substitution only)</div>
<div style="left:287px;top:394px;width:13px;height:13px;border:1px solid #333;background:#fff"></div>
<div class="c" style="left:303px;top:390px;width:600px;height:21px;letter-spacing:0.15px">Ignore Case</div>
<div style="left:696px;top:343px;width:190px;height:23px;border:1px solid #a8a8b0;border-top-color:#d0d0d0;background:#fff"></div>
<div style="left:283px;top:412px;width:601px;height:1px;background:#9b9ba0"></div>
<div class="c" style="left:300.2px;top:413px;width:139px;height:15px;color:#222;line-height:15px">From</div>
<div class="c" style="left:440.3px;top:413px;width:139px;height:15px;color:#222;line-height:15px">To</div>
<svg style="left:429px;top:415px" width="7" height="9" viewBox="0 0 7 9"><path d="M1.8 1.8L5.2 4.5L1.8 7.2" fill="none" stroke="#8a8a8a" stroke-width="1.7" stroke-linecap="round" stroke-linejoin="round"/></svg>
<svg style="left:873px;top:415px" width="7" height="9" viewBox="0 0 7 9"><path d="M1.8 1.8L5.2 4.5L1.8 7.2" fill="none" stroke="#8a8a8a" stroke-width="1.7" stroke-linecap="round" stroke-linejoin="round"/></svg>
<div style="left:283px;top:428px;width:601px;height:1px;background:#9b9ba0"></div>
<div style="left:283px;top:450px;width:601px;height:1px;background:#9b9ba0"></div>
<svg style="left:287px;top:434px" width="7" height="9" viewBox="0 0 7 9"><path d="M1.8 1.8L5.2 4.5L1.8 7.2" fill="none" stroke="#8a8a8a" stroke-width="1.7" stroke-linecap="round" stroke-linejoin="round"/></svg>
<div class="c" style="left:299.5px;top:429px;width:139px;height:21px;">Co</div>
<div style="left:283px;top:472px;width:601px;height:1px;background:#9b9ba0"></div>
<svg style="left:287px;top:456px" width="7" height="9" viewBox="0 0 7 9"><path d="M1.8 1.8L5.2 4.5L1.8 7.2" fill="none" stroke="#8a8a8a" stroke-width="1.7" stroke-linecap="round" stroke-linejoin="round"/></svg>
<div class="c" style="left:299.5px;top:451px;width:139px;height:21px;">Inc</div>
<div style="left:283px;top:494px;width:601px;height:1px;background:#9b9ba0"></div>
<svg style="left:287px;top:478px" width="7" height="9" viewBox="0 0 7 9"><path d="M1.8 1.8L5.2 4.5L1.8 7.2" fill="none" stroke="#8a8a8a" stroke-width="1.7" stroke-linecap="round" stroke-linejoin="round"/></svg>
<div class="c" style="left:299.5px;top:473px;width:139px;height:21px;">Limited</div>
<div style="left:283px;top:516px;width:601px;height:1px;background:#9b9ba0"></div>
<svg style="left:287px;top:500px" width="7" height="9" viewBox="0 0 7 9"><path d="M1.8 1.8L5.2 4.5L1.8 7.2" fill="none" stroke="#8a8a8a" stroke-width="1.7" stroke-linecap="round" stroke-linejoin="round"/></svg>
<div class="c" style="left:299.5px;top:495px;width:139px;height:21px;">Ltd</div>
<div style="left:283px;top:538px;width:601px;height:1px;background:#9b9ba0"></div>
<svg style="left:287px;top:522px" width="7" height="9" viewBox="0 0 7 9"><path d="M1.8 1.8L5.2 4.5L1.8 7.2" fill="none" stroke="#8a8a8a" stroke-width="1.7" stroke-linecap="round" stroke-linejoin="round"/></svg>
<div class="c" style="left:299.5px;top:517px;width:139px;height:21px;"></div>
<div style="left:299px;top:413px;width:1px;height:126px;background:#9b9ba0"></div>
<div style="left:439px;top:413px;width:1px;height:126px;background:#9b9ba0"></div>
<div style="left:883px;top:413px;width:1px;height:126px;background:#9b9ba0"></div>
<svg style="left:289px;top:553px" width="7" height="9" viewBox="0 0 7 9"><path d="M1.8 1.8L5.2 4.5L1.8 7.2" fill="none" stroke="#8a8a8a" stroke-width="1.7" stroke-linecap="round" stroke-linejoin="round"/></svg>
<div style="left:301px;top:551px;width:1px;height:17px;background:#9b9ba0"></div>
<div style="left:286px;top:566px;width:16px;height:1px;background:#909090"></div>
<div class="c" style="left:304px;top:548.5px;width:100px;height:21px;color:#0000ff;font-size:11.6px">Add Row</div>
<div class="c" style="left:282px;top:577px;width:100px;height:21px;">5 Rows</div>
<div class="c" style="left:680px;top:577px;width:137px;height:21px;border:1px solid #adadad;background:#e1e1e1;text-align:center;line-height:19px">Import From Clipboard</div>
<div class="c" style="left:824px;top:577px;width:57px;height:21px;border:1px solid #bfbfbf;background:#cccccc;text-align:center;line-height:19px;color:#838383">Apply</div>
</body></html>
